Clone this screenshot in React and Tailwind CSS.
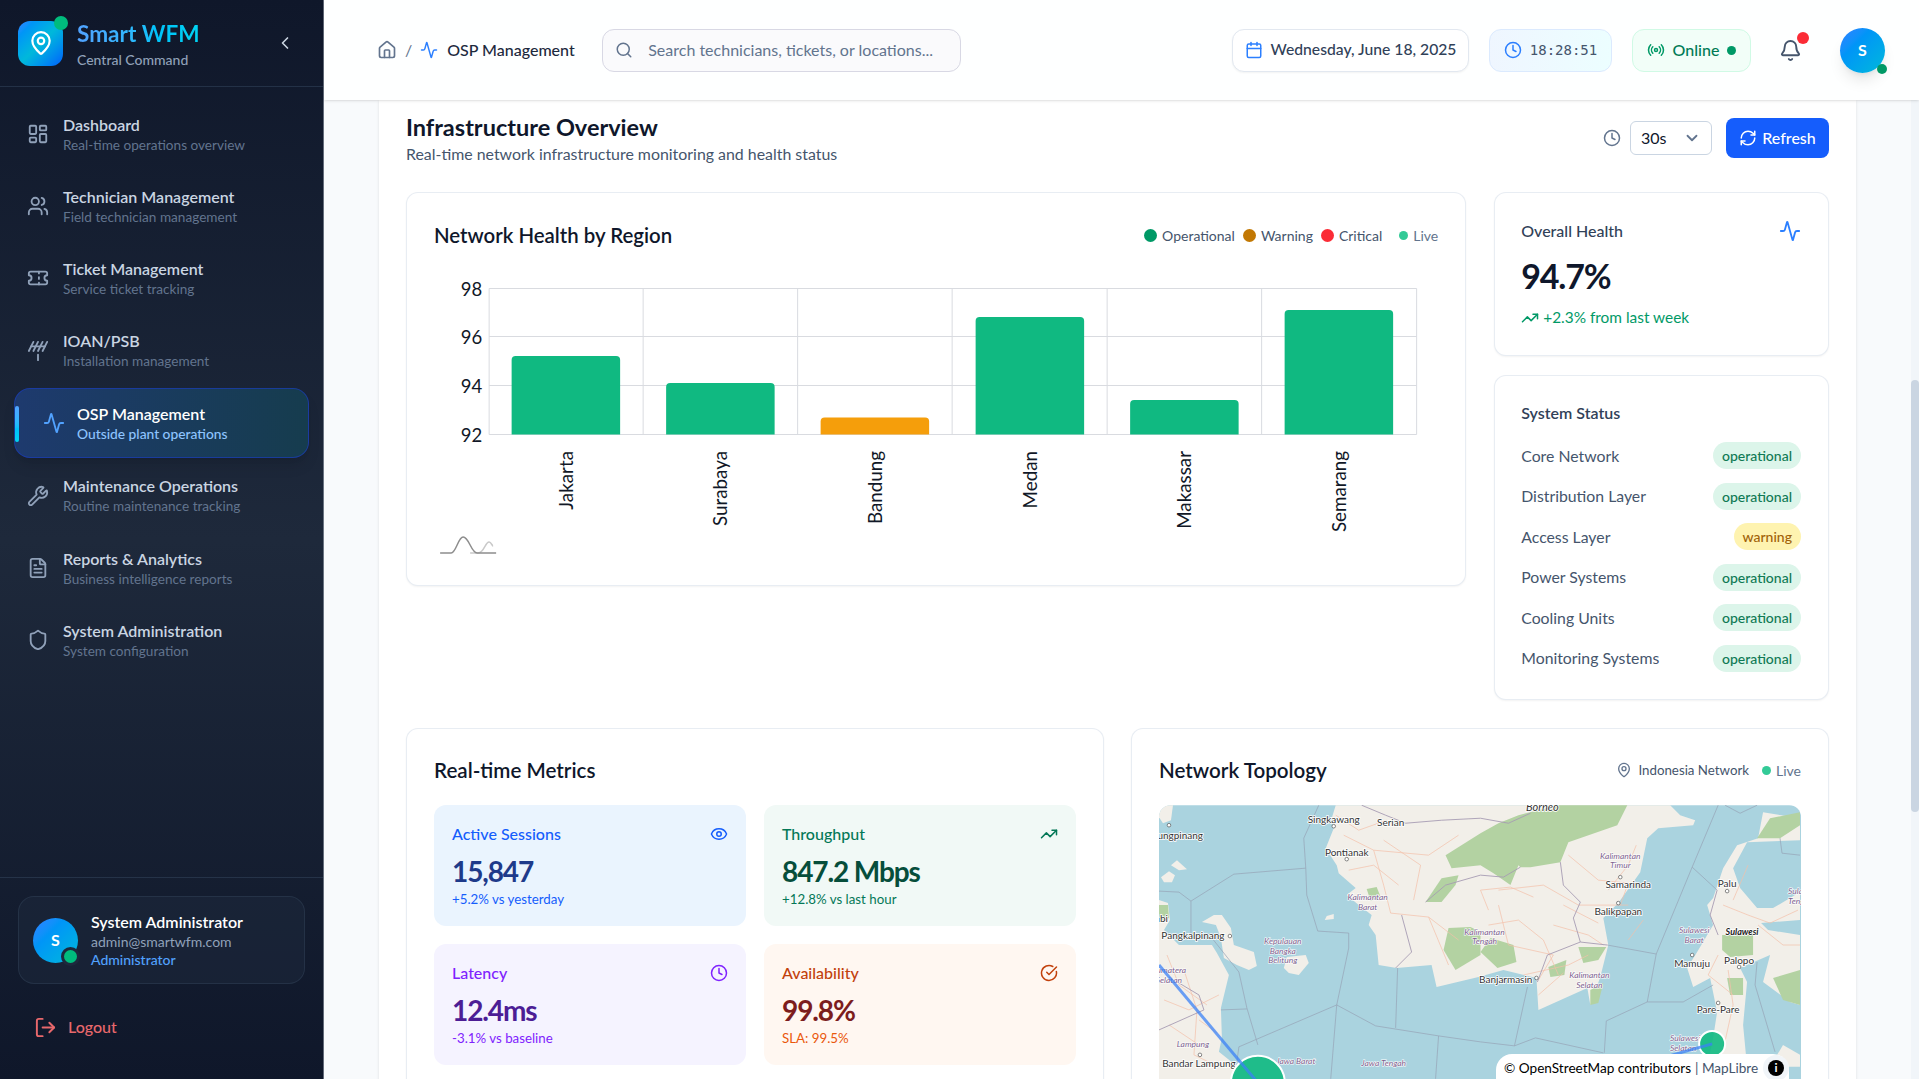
import {
  Activity, Antenna, Bell, Calendar, ChevronDown, ChevronLeft, CircleCheckBig, Clock, Eye, FileText,
  House, LayoutDashboard, LogOut, MapPin, Radio, RefreshCw, Search, Shield, Ticket, TrendingUp, Users, Wrench,
} from 'lucide-react';

const navItems = [
  { label: 'Dashboard', sub: 'Real-time operations overview', icon: LayoutDashboard },
  { label: 'Technician Management', sub: 'Field technician management', icon: Users },
  { label: 'Ticket Management', sub: 'Service ticket tracking', icon: Ticket },
  { label: 'IOAN/PSB', sub: 'Installation management', icon: Antenna },
  { label: 'OSP Management', sub: 'Outside plant operations', icon: Activity, active: true },
  { label: 'Maintenance Operations', sub: 'Routine maintenance tracking', icon: Wrench },
  { label: 'Reports & Analytics', sub: 'Business intelligence reports', icon: FileText },
  { label: 'System Administration', sub: 'System configuration', icon: Shield },
];

const bars = [
  { name: 'Jakarta', x: 511.5, top: 356, fill: '#10b981' },
  { name: 'Surabaya', x: 666, top: 383, fill: '#10b981' },
  { name: 'Bandung', x: 820.5, top: 417.5, fill: '#f59e0b' },
  { name: 'Medan', x: 975.5, top: 317, fill: '#10b981' },
  { name: 'Makassar', x: 1130, top: 400, fill: '#10b981' },
  { name: 'Semarang', x: 1284.5, top: 310, fill: '#10b981' },
];

const systems = [
  ['Core Network', 'operational'],
  ['Distribution Layer', 'operational'],
  ['Access Layer', 'warning'],
  ['Power Systems', 'operational'],
  ['Cooling Units', 'operational'],
  ['Monitoring Systems', 'operational'],
];

const metrics = [
  { label: 'Active Sessions', value: '15,847', sub: '+5.2% vs yesterday', icon: Eye, box: 'bg-[#eaf4fe]', head: 'text-blue-600', val: 'text-[#1e3a8a]', note: 'text-blue-600' },
  { label: 'Throughput', value: '847.2 Mbps', sub: '+12.8% vs last hour', icon: TrendingUp, box: 'bg-[#f1f9f6]', head: 'text-[#047857]', val: 'text-[#064e3b]', note: 'text-[#047857]' },
  { label: 'Latency', value: '12.4ms', sub: '-3.1% vs baseline', icon: Clock, box: 'bg-[#f5f3ff]', head: 'text-violet-600', val: 'text-[#4c1d95]', note: 'text-violet-600' },
  { label: 'Availability', value: '99.8%', sub: 'SLA: 99.5%', icon: CircleCheckBig, box: 'bg-[#fff7f1]', head: 'text-[#c2410c]', val: 'text-[#7c1d1d]', note: 'text-[#ea580c]' },
];

const seaLines = [
  '160,0 145,33 147,63 148,90 159,126 190,128 190,143 178,200',
  '147,63 75,69 32,96 20,87 0,86', '32,96 32,133', '178,200 80,242 78,257',
  '178,200 217,221 280,231 322,237 356,241 377,233 445,248', '237,223 239,163', '178,200 172,274',
  '280,231 277,274', '53,133 80,167 88,203 99,240', '62,205 88,204',
  '560,0 534,62 498,149 489,197 448,216 446,248', '534,62 559,85', '498,149 449,140',
  '489,197 525,197 555,180', '356,241 369,182', '599,157 597,180 617,247', '567,0 582,8 599,0', '622,33 624,48 642,50',
];

const landBorders = [
  '203,0 227,10 247,18 283,15 322,13 350,18 372,8', '267,97 287,80 322,70 345,72 362,62', '243,110 253,147 237,163',
  '402,57 405,80 422,97 415,113 422,137 449,140', '422,137 389,150 379,177', '10,172 40,190 45,205 0,225', '559,85 552,110 560,130',
];

const roads = [
  '185,30 215,45 225,80 232,108 270,112 300,135', '215,45 270,50 300,30', '190,65 215,60 240,80', '270,112 290,160',
  '340,85 385,80 420,100 470,100', '340,100 350,140 395,150 380,175', '410,50 440,75 470,78 462,100', '395,120 430,130 445,140',
  '25,165 38,205 35,250 60,262', '5,195 30,205 60,190', '10,220 40,240', '565,100 590,110 612,118 640,105',
  '570,165 575,200 565,245', '600,120 625,140 642,140', '485,115 470,135', '330,120 360,115 385,135 400,170',
  '177,10 200,25 228,15', '225,35 262,60 255,95', '330,105 322,85 352,82 375,92', '405,100 440,118', '365,170 410,160 430,150',
  '380,190 405,168', '450,85 470,60 478,40', '560,150 550,170 575,190', '8,150 20,180 48,200', '40,215 58,228', '590,60 575,95',
];

const forests = [
  'M287,50 L322,28 L340,18 L360,10 L400,0 L469,0 L459,20 L410,37 L402,57 L372,62 L362,62 L360,60 L352,80 L335,68 L322,60 L293,63 Z',
  'M267,97 L283,73 L300,70 L297,80 L283,97 Z',
  'M290,123 L312,122 L322,127 L322,150 L297,165 L285,145 Z',
  'M322,147 L332,133 L355,140 L358,157 L339,163 Z',
  'M564,130 L595,130 L595,150 L572,152 L564,145 Z',
  'M569,173 L585,173 L585,190 L572,190 Z',
  'M599,33 L612,13 L642,7 L642,20 L622,33 Z',
  'M615,173 L642,165 L642,200 L625,195 Z',
  'M0,100 L9,100 L10,113 L0,118 Z',
  'M208,84 L218,82 L222,92 L212,96 Z',
  'M390,162 L408,155 L406,170 L392,172 Z',
  'M432,185 L445,178 L440,198 L432,200 Z',
  'M420,142 L448,142 L440,155 L425,158 Z',
];

const cityLabels = [
  ['Tanjungpinang', 44, 34, 'end'], ['Singkawang', 175, 18], ['Serian', 232, 21], ['Pontianak', 188, 51],
  ['Pangkalpinang', 34, 134], ['Bandar Lampung', 40, 262], ['Samarinda', 470, 83], ['Balikpapan', 460, 110],
  ['Banjarmasin', 374, 178, 'end'], ['Palu', 569, 82], ['Palopo', 581, 159], ['Mamuju', 534, 162], ['Pare-Pare', 560, 208],
  ['Jambi', 9, 117, 'end'],
];

const regionLabels = [
  ['Kalimantan', 209, 95], ['Barat', 209, 105], ['Kepulauan', 124, 139], ['Bangka', 124, 149], ['Belitung', 124, 158],
  ['Sumatera', 27, 168, 'end'], ['Selatan', 23, 178, 'end'], ['Lampung', 34, 242], ['Jawa Barat', 137, 259], ['Jawa Tengah', 225, 261],
  ['Kalimantan', 462, 54], ['Timur', 462, 63], ['Kalimantan', 326, 130], ['Tengah', 326, 139], ['Kalimantan', 431, 173], ['Selatan', 431, 183],
  ['Sulawesi', 536, 128], ['Barat', 536, 138], ['Sulawesi', 527, 236], ['Selatan', 525, 246], ['Sulawesi', 630, 89, 'start'], ['Tengah', 630, 99, 'start'],
];

const markers = [[10, 20], [175, 21], [188, 54], [71, 131], [41, 250], [462, 72], [460, 98], [378, 173], [569, 86], [581, 162], [534, 150], [560, 198]];

function NetworkMap() {
  return (
    <svg viewBox="0 0 643 320" className="block w-full h-[320px]">
      <rect width="643" height="320" fill="#aad3df" />
      {/* land */}
      <g fill="#f2efe9">
        <path d="M177,0 L173,13 L175,23 L167,43 L178,60 L180,68 L197,83 L188,90 L200,100 L213,110 L210,120 L217,130 L220,160 L238,163 L273,160 L278,182 L320,172 L345,165 L378,173 L380,205 L429,183 L432,200 L442,172 L450,140 L445,113 L460,98 L482,67 L489,33 L500,23 L535,20 L537,15 L522,10 L512,0 Z" />
        <path d="M642,13 L605,7 L600,33 L579,40 L565,63 L555,93 L549,100 L555,120 L539,147 L529,163 L535,182 L552,173 L559,207 L555,233 L549,262 L589,262 L585,220 L589,177 L582,163 L612,150 L605,177 L632,197 L642,200 L642,130 L610,125 L603,118 L642,115 L642,87 L615,103 L599,103 L582,83 L575,63 L589,37 L642,35 Z" />
        <path d="M0,95 L9,98 L11,115 L5,125 L20,140 L53,140 L58,148 L70,170 L62,203 L63,233 L60,247 L80,263 L60,290 L0,290 Z" />
        <path d="M43,117 L55,110 L63,110 L72,123 L75,140 L95,147 L98,161 L90,165 L78,160 L65,153 L62,133 L57,120 Z" />
        <path d="M125,163 L128,152 L147,150 L150,158 L140,170 L130,168 Z" />
        <path d="M0,0 L14,0 L12,15 L4,18 L0,12 Z" />
        <path d="M2,72 L10,66 L16,70 L13,77 L5,77 Z" />
        <path d="M12,60 L18,55 L28,64 L20,65 Z" />
        <path d="M168,111 L175,109 L175,114 L166,115 Z" />
        <path d="M612,262 L625,240 L642,250 L642,262 Z" />
      </g>
      <g fill="#b3d2a2">
        {forests.map((d) => <path key={d} d={d} />)}
      </g>
      <g fill="none" stroke="#f3bfa8" strokeWidth="0.7">
        {roads.map((p) => <polyline key={p} points={p} />)}
      </g>
      <g fill="none" stroke="#a79cb3" strokeWidth="0.9">
        {landBorders.map((p) => <polyline key={p} points={p} />)}
      </g>
      <g fill="none" stroke="#96a3b5" strokeWidth="0.7">
        {seaLines.map((p) => <polyline key={p} points={p} />)}
      </g>
      {/* labels */}
      <g fontSize="10" fill="#333" stroke="#ffffff" strokeWidth="1.6" paintOrder="stroke" textAnchor="middle">
        {cityLabels.map(([t, x, y, a]) => <text key={t} x={x} y={y} textAnchor={a}>{t}</text>)}
        <text x="584" y="130" fontStyle="italic" fontWeight="700" fontSize="9" fill="#222">Sulawesi</text>
        <text x="384" y="6" fontStyle="italic" fontSize="11" fill="#333">Borneo</text>
      </g>
      <g fontSize="8.5" fontStyle="italic" fill="#7d5f8e" stroke="#ffffff" strokeWidth="1.2" paintOrder="stroke" textAnchor="middle">
        {regionLabels.map(([t, x, y, a]) => <text key={`${t}${x}`} x={x} y={y} textAnchor={a}>{t}</text>)}
      </g>
      <g fill="#ffffff" stroke="#555" strokeWidth="0.7">
        {markers.map(([x, y]) => <circle key={`${x}${y}`} cx={x} cy={y} r="1.8" />)}
      </g>
      {/* site nodes and links */}
      <circle cx="99" cy="278" r="27" fill="#10b981" fillOpacity="0.9" stroke="#fff" strokeWidth="2" />
      <circle cx="554" cy="239" r="13" fill="#10b981" fillOpacity="0.9" stroke="#fff" strokeWidth="2" />
      <line x1="0" y1="160" x2="99" y2="278" stroke="#3b82f6" strokeOpacity="0.75" strokeWidth="3" />
      <line x1="400" y1="282" x2="554" y2="239" stroke="#3b82f6" strokeOpacity="0.75" strokeWidth="3" />
    </svg>
  );
}

function HealthChart() {
  const columns = [489, 643, 797.5, 952, 1107, 1261.5, 1416.5];
  const rows = [[288.5, '98'], [336.5, '96'], [385.5, '94'], [434.5, '92']];
  return (
    <svg viewBox="434 270 1004 286" className="block w-full h-[286px]">
      <g stroke="#d9dbe0" strokeWidth="1">
        {rows.map(([y]) => <line key={y} x1="489" x2="1416.5" y1={y} y2={y} />)}
        {columns.map((x) => <line key={x} x1={x} x2={x} y1="288.5" y2="434.5" />)}
      </g>
      {rows.map(([y, t]) => <text key={t} x="482" y={y + 7} textAnchor="end" fontSize="18.5" fill="#111827">{t}</text>)}
      {bars.map((b) => (
        <g key={b.name}>
          <path d={`M${b.x},434.5 V${b.top + 4} Q${b.x},${b.top} ${b.x + 4},${b.top} H${b.x + 104.5} Q${b.x + 108.5},${b.top} ${b.x + 108.5},${b.top + 4} V434.5 Z`} fill={b.fill} />
          <text transform={`translate(${b.x + 61},451) rotate(-90)`} textAnchor="end" fontSize="18.8" fill="#111827">{b.name}</text>
        </g>
      ))}
      <path d="M470,553 H478 C484,553 485,542 489,542 C491,542 492,546 493,546" fill="none" stroke="#c9c9c9" strokeWidth="1.5" />
      <path d="M440,553 H451 C456,553 458,537 463,537 C469,537 471,553 477,553 H496" fill="none" stroke="#8d8d8d" strokeWidth="1.5" />
    </svg>
  );
}

function Sidebar() {
  return (
    <aside className="w-[324px] h-full shrink-0 flex flex-col bg-linear-to-b from-[#0f172a] via-[#1e293b] to-[#0f172a] border-r border-slate-200/40">
      <div className="h-[87px] shrink-0 flex items-center pl-[18px] pr-[28px] border-b border-slate-700/60">
        <div className="relative w-[45px] h-[45px] rounded-xl flex items-center justify-center bg-linear-to-br from-blue-500 via-cyan-500 to-blue-600">
          <MapPin size={26} color="#fff" strokeWidth={2} />
          <span className="absolute -top-[5px] -right-[5px] w-[14px] h-[14px] rounded-full bg-emerald-500" />
        </div>
        <div className="ml-[14px] pt-[3px]">
          <div className="text-[22.6px] leading-[28px] font-bold bg-linear-to-r from-blue-400 to-cyan-400 bg-clip-text text-transparent">Smart WFM</div>
          <div className="text-[14px] leading-[20px] mt-[2px] font-medium text-slate-400">Central Command</div>
        </div>
        <ChevronLeft size={20} className="ml-auto text-slate-300" />
      </div>

      <nav className="pt-[12px] flex-1 flex flex-col gap-[2.2px]">
        {navItems.map((item) => {
          const Icon = item.icon;
          if (item.active) {
            return (
              <div key={item.label} className="relative h-[70px] mb-[1px] mx-[14px] rounded-2xl border border-blue-800/70 bg-linear-to-r from-[#1e3a6e] to-[#163c4e] shadow-lg flex items-center pl-[28px]">
                <span className="absolute left-0 top-[17px] w-[4px] h-[36px] rounded-full bg-linear-to-b from-blue-400 to-cyan-400" />
                <Icon size={22} className="text-blue-400" />
                <div className="ml-[12px]">
                  <div className="text-[16px] leading-[21px] font-semibold text-white">{item.label}</div>
                  <div className="text-[13.8px] leading-[19px] font-medium text-blue-300">{item.sub}</div>
                </div>
              </div>
            );
          }
          return (
            <div key={item.label} className="h-[70px] flex items-center pl-[27px]">
              <Icon size={22} className="text-slate-400" />
              <div className="ml-[14px]">
                <div className="text-[16px] leading-[21px] font-semibold text-slate-300">{item.label}</div>
                <div className="text-[13.6px] leading-[20px] text-slate-500">{item.sub}</div>
              </div>
            </div>
          );
        })}
      </nav>

      <div className="h-[202px] shrink-0 border-t border-slate-700/60 px-[18px] pt-[18px]">
        <div className="h-[88px] rounded-2xl border border-slate-700/50 bg-slate-800/50 flex items-center pl-[14px]">
          <div className="relative w-[45px] h-[45px] rounded-full bg-linear-to-br from-blue-500 to-cyan-500 flex items-center justify-center text-white font-bold text-[16px]">
            S
            <span className="absolute -right-[2px] -bottom-[3px] w-[19px] h-[19px] rounded-full bg-emerald-500 border-[3px] border-slate-800" />
          </div>
          <div className="ml-[13px]">
            <div className="text-[16px] leading-[20px] font-semibold text-white">System Administrator</div>
            <div className="text-[14px] leading-[19px] text-slate-400">admin@smartwfm.com</div>
            <div className="text-[14px] leading-[18px] font-medium text-blue-400">Administrator</div>
          </div>
        </div>
        <div className="mt-[31px] flex items-center pl-[16px] text-[#e8686c]">
          <LogOut size={23} />
          <span className="ml-[11px] text-[16px] font-medium">Logout</span>
        </div>
      </div>
    </aside>
  );
}

function Header() {
  return (
    <header className="relative z-10 h-[100px] shrink-0 bg-white/90 shadow-sm flex items-center pl-[53px] pr-[34px]">
      <House size={20} className="text-slate-500" />
      <span className="ml-[8px] text-slate-500 text-[16px]">/</span>
      <Activity size={18} className="ml-[8px] text-blue-500" />
      <span className="ml-[9px] w-[127px] text-[16px] font-medium text-slate-800 whitespace-nowrap">OSP Management</span>
      <div className="ml-[28px] w-[359px] h-[43px] rounded-xl border border-[#d8d8e4] bg-[#fafafc] flex items-center pl-[12px]">
        <Search size={18} className="text-slate-500" />
        <span className="ml-[15px] text-[16px] text-slate-500">Search technicians, tickets, or locations...</span>
      </div>

      <div className="ml-auto flex items-center">
        <div className="w-[237px] h-[43px] rounded-xl border border-slate-200 bg-white shadow-xs flex items-center justify-center gap-[8px]">
          <Calendar size={18} className="text-blue-500" />
          <span className="text-[15.7px] font-medium text-slate-700">Wednesday, June 18, 2025</span>
        </div>
        <div className="ml-[20px] w-[123px] h-[43px] rounded-xl border border-blue-100 bg-linear-to-r from-blue-50 to-cyan-50 flex items-center justify-center gap-[8px]">
          <Clock size={18} className="text-blue-500" />
          <span className="text-[14px] font-['DejaVu_Sans_Mono',monospace] text-slate-600">18:28:51</span>
        </div>
        <div className="ml-[20px] w-[119px] h-[43px] rounded-xl border border-emerald-100 bg-emerald-50/70 flex items-center justify-center gap-[8px]">
          <Radio size={18} className="text-emerald-600" />
          <span className="text-[16px] font-medium text-emerald-700">Online</span>
          <span className="w-[9px] h-[9px] rounded-full bg-emerald-600" />
        </div>
        <div className="relative ml-[28px]">
          <Bell size={23} className="text-slate-600" />
          <span className="absolute -top-[7px] -right-[7px] w-[12px] h-[12px] rounded-full bg-red-500" />
        </div>
        <div className="relative ml-[38px] w-[45px] h-[45px] rounded-full bg-linear-to-br from-blue-500 to-cyan-500 shadow-lg flex items-center justify-center text-white font-bold text-[16px]">
          S
          <span className="absolute -right-[2px] -bottom-[1px] w-[10px] h-[10px] rounded-full bg-emerald-600" />
        </div>
      </div>
    </header>
  );
}

const cardClass = 'bg-white rounded-xl border border-slate-200/80 shadow-xs';

function LiveBadge() {
  return (
    <span className="flex items-center gap-[5px] text-[14px] text-slate-500">
      <span className="w-[9px] h-[9px] rounded-full bg-emerald-500/80" />
      Live
    </span>
  );
}

function Legend({ color, label }) {
  return (
    <span className="flex items-center gap-[5px] text-[14px] text-slate-600">
      <span className={`w-[13px] h-[13px] rounded-full ${color}`} />
      {label}
    </span>
  );
}

export default function App() {
  return (
    <div className="h-screen w-full flex overflow-hidden bg-slate-50 font-['Lato',sans-serif]">
      <Sidebar />
      <div className="flex-1 min-w-0 flex flex-col">
        <Header />
        <div className="flex-1 min-h-0 flex overflow-hidden">
          <main className="flex-1 min-w-0 px-[55px]">
            <div className="bg-white shadow-sm px-[27px] pt-[13px] min-h-full">
              <div className="flex items-start h-[58px]">
                <div>
                  <h1 className="text-[23.5px] leading-[28px] font-bold text-slate-900">Infrastructure Overview</h1>
                  <p className="mt-[1px] text-[15.9px] leading-[24px] text-slate-600">Real-time network infrastructure monitoring and health status</p>
                </div>
                <div className="ml-auto mt-[5px] flex items-center">
                  <Clock size={18} className="text-slate-500" />
                  <div className="ml-[9px] w-[82px] h-[34px] rounded-md border border-slate-300 bg-white flex items-center justify-between pl-[10px] pr-[10px] text-[16px] text-slate-900">
                    30s
                    <ChevronDown size={18} strokeWidth={2.4} className="text-slate-500" />
                  </div>
                  <button className="ml-[14px] w-[103px] h-[40px] rounded-lg bg-blue-600 text-white text-[16px] font-medium flex items-center justify-center gap-[5px]">
                    <RefreshCw size={18} />
                    Refresh
                  </button>
                </div>
              </div>

              <div className="mt-[21px] grid grid-cols-4 gap-[28px] items-start">
                <section className={`col-span-3 ${cardClass} px-[27px] pt-[28px] pb-[29px]`}>
                  <div className="h-[28px] mb-[21px] flex items-center justify-between">
                    <h2 className="text-[20.4px] font-semibold text-slate-900">Network Health by Region</h2>
                    <div className="flex items-center gap-[8px]">
                      <Legend color="bg-emerald-600" label="Operational" />
                      <Legend color="bg-[#c27803]" label="Warning" />
                      <Legend color="bg-red-500" label="Critical" />
                      <span className="ml-[9px]"><LiveBadge /></span>
                    </div>
                  </div>
                  <HealthChart />
                </section>

                <div className="flex flex-col gap-[19px]">
                  <section className={`${cardClass} h-[163.5px] pl-[26px] pr-[27px] pt-[27px]`}>
                    <div className="flex items-center justify-between h-[22px]">
                      <span className="text-[16px] font-medium text-slate-700">Overall Health</span>
                      <Activity size={22} className="text-blue-500" />
                    </div>
                    <div className="mt-[12px] text-[34px] leading-[44px] tracking-[-1.2px] font-bold text-slate-900">94.7%</div>
                    <div className="mt-[8px] flex items-center gap-[4px] text-[15.4px] text-emerald-600">
                      <TrendingUp size={18} />
                      +2.3% from last week
                    </div>
                  </section>

                  <section className={`${cardClass} h-[325.5px] pl-[26px] pr-[27px] pt-[26px]`}>
                    <h3 className="text-[16px] leading-[22px] font-semibold text-slate-700">System Status</h3>
                    <div className="mt-[18.5px] flex flex-col gap-[13.5px]">
                      {systems.map(([name, status]) => (
                        <div key={name} className="h-[27px] flex items-center justify-between">
                          <span className="text-[15.8px] text-slate-600">{name}</span>
                          <span className={`h-[27px] px-[9px] rounded-full flex items-center text-[14px] font-medium ${status === 'warning' ? 'bg-[#fef3b0] text-[#a16207]' : 'bg-[#dcf5ea] text-[#0f7a55]'}`}>{status}</span>
                        </div>
                      ))}
                    </div>
                  </section>
                </div>
              </div>

              <div className="mt-[28px] grid grid-cols-2 gap-[27px]">
                <section className={`${cardClass} p-[27px] h-[500px]`}>
                  <div className="h-[28px] flex items-center">
                    <h2 className="text-[20.6px] font-semibold text-slate-900">Real-time Metrics</h2>
                  </div>
                  <div className="mt-[21px] grid grid-cols-2 gap-[18px]">
                    {metrics.map((m) => {
                      const Icon = m.icon;
                      return (
                        <div key={m.label} className={`h-[121px] rounded-xl px-[18px] pt-[18px] ${m.box}`}>
                          <div className={`flex items-center justify-between h-[22px] ${m.head}`}>
                            <span className="text-[16px] font-medium">{m.label}</span>
                            <Icon size={18} />
                          </div>
                          <div className={`mt-[8px] text-[28px] leading-[36px] tracking-[-1.1px] font-bold ${m.val}`}>{m.value}</div>
                          <div className={`text-[13.3px] leading-[20px] ${m.note}`}>{m.sub}</div>
                        </div>
                      );
                    })}
                  </div>
                </section>

                <section className={`${cardClass} p-[27px] h-[500px]`}>
                  <div className="h-[28px] flex items-center justify-between">
                    <h2 className="text-[20.6px] font-semibold text-slate-900">Network Topology</h2>
                    <div className="flex items-center">
                      <MapPin size={16} className="text-slate-500" />
                      <span className="ml-[6px] text-[13.3px] leading-[20px] text-slate-600">Indonesia Network</span>
                      <span className="ml-[13px]"><LiveBadge /></span>
                    </div>
                  </div>
                  <div className="relative mt-[21px] rounded-xl overflow-hidden">
                    <NetworkMap />
                    <div className="absolute left-[337px] top-[249px] w-[293px] h-[40px] rounded-2xl bg-white flex items-start pl-[8px] pt-[4px] text-[13.6px] whitespace-nowrap text-black">
                      <span>© OpenStreetMap contributors</span>
                      <span className="ml-[4px] text-slate-600">| MapLibre</span>
                      <span className="absolute right-[0px] top-[1px] w-[26px] h-[26px] rounded-full bg-slate-100 flex items-center justify-center">
                        <span className="w-[16px] h-[16px] rounded-full bg-black text-white text-[12px] leading-[16px] font-bold text-center">i</span>
                      </span>
                    </div>
                  </div>
                </section>
              </div>
            </div>
          </main>
          <div className="w-[8px] shrink-0 bg-slate-100">
            <div className="mt-[280px] h-[432px] bg-slate-300 rounded-full" />
          </div>
        </div>
      </div>
    </div>
  );
}
